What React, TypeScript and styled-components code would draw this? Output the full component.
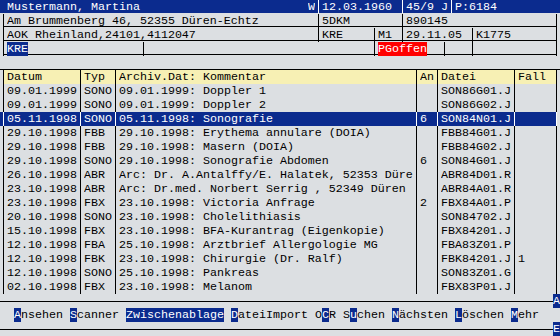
import styled, { createGlobalStyle } from 'styled-components'

const CH = 7
const BLUE = '#0b2b8e'
const GREY = '#dcdfe2'
const YELLOW = '#f7f0b4'

const GlobalStyle = createGlobalStyle`
  html, body {
    margin: 0;
    padding: 0;
    background: ${GREY};
  }
`

type Entry = {
  date: string
  typ: string
  text: string
  an?: string
  file: string
  fall?: string
  selected?: boolean
}

const entries: Entry[] = [
  { date: '09.01.1999', typ: 'SONO', text: '09.01.1999: Doppler 1', file: 'SON86G01.J' },
  { date: '09.01.1999', typ: 'SONO', text: '09.01.1999: Doppler 2', file: 'SON86G02.J' },
  { date: '05.11.1998', typ: 'SONO', text: '05.11.1998: Sonografie', an: '6', file: 'SON84N01.J', selected: true },
  { date: '29.10.1998', typ: 'FBB', text: '29.10.1998: Erythema annulare (DOIA)', file: 'FBB84G01.J' },
  { date: '29.10.1998', typ: 'FBB', text: '29.10.1998: Masern (DOIA)', file: 'FBB84G02.J' },
  { date: '29.10.1998', typ: 'SONO', text: '29.10.1998: Sonografie Abdomen', an: '6', file: 'SON84G01.J' },
  { date: '26.10.1998', typ: 'ABR', text: 'Arc: Dr. A.Antalffy/E. Halatek, 52353 Düre', file: 'ABR84D01.R' },
  { date: '23.10.1998', typ: 'ABR', text: 'Arc: Dr.med. Norbert Serrig , 52349 Düren', file: 'ABR84A01.R' },
  { date: '23.10.1998', typ: 'FBX', text: '23.10.1998: Victoria Anfrage', an: '2', file: 'FBX84A01.P' },
  { date: '20.10.1998', typ: 'SONO', text: '23.10.1998: Cholelithiasis', file: 'SON84702.J' },
  { date: '15.10.1998', typ: 'FBX', text: '23.10.1998: BFA-Kurantrag (Eigenkopie)', file: 'FBX84201.J' },
  { date: '12.10.1998', typ: 'FBA', text: '25.10.1998: Arztbrief Allergologie MG', file: 'FBA83Z01.P' },
  { date: '12.10.1998', typ: 'FBK', text: '23.10.1998: Chirurgie (Dr. Ralf)', file: 'FBK84201.J', fall: '1' },
  { date: '12.10.1998', typ: 'SONO', text: '25.10.1998: Pankreas', file: 'SON83Z01.G' },
  { date: '02.10.1998', typ: 'FBX', text: '23.10.1998: Melanom', file: 'FBX83P01.J' }
]

// label + indexes of the hotkey letters
const menu: [string, number[]][] = [
  ['Ansehen', [0]],
  ['Scanner', [0]],
  ['Zwischenablage', [0, 1, 2, 3, 4, 5, 6, 7, 8, 9, 10, 11, 12, 13]],
  ['DateiImport', [0]],
  ['OCR', [1]],
  ['Suchen', [1]],
  ['Nächsten', [0]],
  ['Löschen', [0]],
  ['Mehr', [0]]
]

function MenuItem ({ label, hot }: { label: string, hot: number[] }) {
  return (
    <Item>
      {label.split('').map((c, i) => (hot.includes(i) ? <Hot key={i}>{c}</Hot> : c))}
    </Item>
  )
}

export default function App () {
  return (
    <>
      <GlobalStyle />
      <Screen>
        <TitleBar>
          <Cell $w={44}> Mustermann, Martina</Cell>
          <Cell $w={1}>W</Cell>
          <Sep />
          <Cell $w={11}>12.03.1960</Cell>
          <Sep />
          <Cell $w={6}>45/9 J</Cell>
          <Sep />
          <Cell $w={15}>P:6184</Cell>
        </TitleBar>

        <FormRow>
          <Sep />
          <Cell $w={44}>Am Brummenberg 46, 52355 Düren-Echtz</Cell>
          <Sep />
          <Cell $w={11}>5DKM</Cell>
          <Sep />
          <Cell $w={21}>890145</Cell>
          <Sep />
        </FormRow>
        <FormRow>
          <Sep />
          <Cell $w={44}>AOK Rheinland,24101,4112047</Cell>
          <Sep />
          <Cell $w={7}>KRE</Cell>
          <Sep />
          <Cell $w={3}>M1</Cell>
          <Sep />
          <Cell $w={9}>29.11.05</Cell>
          <Sep />
          <Cell $w={11}>K1775</Cell>
          <Sep />
        </FormRow>
        <FormRow>
          <Sep />
          <Cell $w={19}><Hot>KRE</Hot></Cell>
          <Sep />
          <Cell $w={32} />
          <Sep />
          <Cell $w={9}><Alert>PGoffen</Alert></Cell>
          <Sep />
          <Cell $w={3} />
          <Sep />
          <Cell $w={11} />
          <Sep />
        </FormRow>
        <Gap />

        <TableRow $kind='head'>
          <Sep />
          <Cell $w={10}>Datum</Cell>
          <Sep />
          <Cell $w={4}>Typ</Cell>
          <Sep />
          <Cell $w={42}>Archiv.Dat: Kommentar</Cell>
          <Sep />
          <Cell $w={2}>An</Cell>
          <Sep />
          <Cell $w={10}>Datei</Cell>
          <Sep />
          <Cell $w={5}>Fall</Cell>
          <Sep />
        </TableRow>
        {entries.map((e, i) => (
          <TableRow key={i} $kind={e.selected ? 'sel' : 'body'}>
            <Sep />
            <Cell $w={10}>{e.date}</Cell>
            <Sep />
            <Cell $w={4}>{e.typ}</Cell>
            <Sep />
            <Cell $w={42}>{e.text}</Cell>
            <Sep />
            <Cell $w={2}>{e.an}</Cell>
            <Sep />
            <Cell $w={10}>{e.file}</Cell>
            <Sep />
            <Cell $w={5}>{e.fall}</Cell>
            <Sep />
          </TableRow>
        ))}

        <RuleRow>
          <Rule />
          <Tag>A</Tag>
        </RuleRow>
        <MenuBar>
          {menu.map(([label, hot]) => <MenuItem key={label} label={label} hot={hot} />)}
        </MenuBar>
        <RuleRow>
          <Rule />
          <Tag>E</Tag>
        </RuleRow>
      </Screen>
    </>
  )
}

const Screen = styled.div`
  width: ${80 * CH}px;
  height: 336px;
  overflow: hidden;
  background: ${GREY};
  color: #000;
  font-family: "Liberation Mono", "DejaVu Sans Mono", monospace;
  font-size: 11.67px;
  line-height: 14px;
`

const Line = styled.div`
  display: flex;
  height: 14px;
  white-space: pre;
`

const Cell = styled.span<{ $w: number }>`
  flex: none;
  width: ${(p) => p.$w * CH}px;
  overflow: hidden;
`

const Sep = styled.span`
  flex: none;
  width: ${CH}px;
  position: relative;

  &::before {
    content: '';
    position: absolute;
    top: 0;
    bottom: 0;
    left: 3px;
    width: 1px;
    background: currentColor;
  }
`

const TitleBar = styled(Line)`
  height: 13px;
  margin-bottom: 1px;
  background: ${BLUE};
  color: #fff;
`

const FormRow = styled(Line)`
  background: linear-gradient(#000, #000) 3px 12px / 554px 1px no-repeat;
`

const Gap = styled(Line)`
  box-shadow: inset 0 -1px 0 #000;
`

const TableRow = styled(Line)<{ $kind: 'head' | 'body' | 'sel' }>`
  color: ${(p) => (p.$kind === 'sel' ? '#fff' : '#000')};
  background: ${(p) =>
    p.$kind === 'head'
      ? `linear-gradient(${YELLOW}, ${YELLOW}) 4px 0 / 552px 100% no-repeat`
      : p.$kind === 'sel'
      ? `linear-gradient(${BLUE}, ${BLUE}) 0 0 / 557px 100% no-repeat`
      : 'none'};
`

const RuleRow = styled(Line)``

const Rule = styled.span`
  flex: 1;
  background: linear-gradient(#000, #000) 0 7px / 100% 1px no-repeat;
`

const Tag = styled.span`
  flex: none;
  width: ${CH}px;
  background: ${BLUE};
  color: #fff;
`

const MenuBar = styled(Line)`
  gap: ${CH}px;
  padding-left: ${2 * CH}px;
`

const Item = styled.span``

const Hot = styled.span`
  background: ${BLUE};
  color: #fff;
`

const Alert = styled.span`
  background: #ff0000;
  color: #fff;
`
